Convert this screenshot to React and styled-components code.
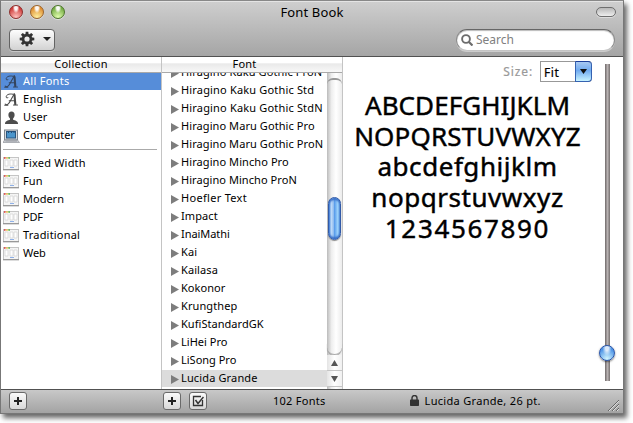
import React from "react";
import styled, { createGlobalStyle } from "styled-components";

const GlobalStyle = createGlobalStyle`
  * { box-sizing: border-box; }
  body { margin: 0; background: #fff; overflow: hidden; }
`;

const Stage = styled.div`
  width: 633px;
  height: 423px;
  overflow: hidden;
  background: #fff;
  font-family: "Noto Sans", "Open Sans", sans-serif;
  font-size: 11px;
  line-height: 18px;
  color: #000;
  white-space: nowrap;
`;

const Window = styled.main`
  width: 624px;
  height: 414px;
  display: flex;
  flex-direction: column;
  border: 1px solid #777;
  border-top-color: #888;
  background: #fff;
  box-shadow: 3px 4px 5px 0 rgba(0, 0, 0, 0.6);
`;

const Spaced = styled.span`
  letter-spacing: ${(p) => p.$ls ?? 0.12}px;
`;

const Chrome = styled.header`
  height: 56px;
  flex: none;
  border-top: 1px solid #e4e4e4;
  border-bottom: 1px solid #515151;
  background: linear-gradient(#cecece, #a5a5a5);
`;

const TitleBar = styled.div`
  height: 22px;
  display: grid;
  grid-template-columns: 80px 1fr 80px;
  align-items: center;
  padding-bottom: 2px;
`;

const Lights = styled.div`
  display: flex;
  gap: 7px;
  padding-left: 8px;
`;

const Light = styled.i`
  width: 14px;
  height: 14px;
  border-radius: 50%;
  border: 1px solid ${(p) => p.$edge};
  background:
    radial-gradient(ellipse at 50% 14%, rgba(255,255,255,0.95) 0 16%, rgba(255,255,255,0) 38%),
    radial-gradient(circle at 50% 92%, ${(p) => p.$glow}, ${(p) => p.$color} 75%);
  box-shadow: 0 1px 0 rgba(255, 255, 255, 0.45);
`;

const Title = styled.h1`
  margin: 0;
  text-align: center;
  font-size: 13px;
  line-height: 20px;
  font-weight: 400;
`;

const Pill = styled.i`
  justify-self: end;
  margin-right: 7px;
  width: 20px;
  height: 10px;
  border: 1px solid #6e6e6e;
  border-radius: 5px;
  background: linear-gradient(#b8b8b8, #eee);
  box-shadow: 0 1px 0 #ddd;
`;

const Tools = styled.div`
  display: flex;
  justify-content: space-between;
  padding: 5px 8px 0;
`;

const GearButton = styled.button`
  width: 46px;
  height: 22px;
  display: flex;
  align-items: center;
  gap: 8px;
  padding: 0 0 2px 9px;
  border: 1px solid #636363;
  border-radius: 4px;
  background: linear-gradient(#fdfdfd, #d2d2d2);
  box-shadow: 0 1px 0 rgba(255, 255, 255, 0.35);
`;

const SearchField = styled.div`
  width: 159px;
  height: 22px;
  display: flex;
  align-items: center;
  gap: 3px;
  padding-left: 4px;
  border: 1px solid #8b8b8b;
  border-top-color: #666;
  border-bottom-color: #c4c4c4;
  border-radius: 11px;
  background: #fff;
  box-shadow: inset 0 1px 1px #bbb, 0 1px 0 #ccc;
  color: #808080;
  font-size: 12px;
`;

const Body = styled.div`
  height: 332px;
  flex: none;
  display: flex;
`;

const Column = styled.section`
  width: ${(p) => p.$w}px;
  flex: none;
  display: flex;
  flex-direction: column;
  border-right: 1px solid #c4c4c4;
`;

const ColumnHead = styled.div`
  height: 16px;
  flex: none;
  line-height: 14px;
  padding-right: ${(p) => p.$pad ?? 0}px;
  text-align: center;
  border-bottom: 1px solid #a9a9a9;
  background: linear-gradient(#fff 0 40%, #e9e9e9 45%, #f8f8f8);
`;

const CollectionRow = styled.div`
  height: 18px;
  display: flex;
  align-items: center;
  gap: 3px;
  padding: 0 0 2px 2px;
  color: ${(p) => (p.$on ? "#fff" : "#000")};
  background: ${(p) => (p.$on ? "linear-gradient(#568dd9 17px, transparent 17px)" : "none")};

  svg { flex: none; margin-top: 2px; }
`;

const Divider = styled.div`
  height: 1px;
  margin: 4px 4px 5px 2px;
  background: #aaa;
`;

const FontPane = styled.div`
  flex: 1;
  min-height: 0;
  display: flex;
`;

const FontList = styled.div`
  flex: 1;
  min-width: 0;
  overflow: hidden;
  display: flex;
  flex-direction: column;
  justify-content: flex-end;
  padding-bottom: 2px;
`;

const FontRow = styled.div`
  height: 18px;
  flex: none;
  display: flex;
  align-items: center;
  gap: 2px;
  padding: 0 0 2px 9px;
  line-height: 17px;
  background: ${(p) => (p.$on ? "linear-gradient(transparent 1px, #dcdcdc 1px)" : "none")};

  svg { flex: none; margin-top: 4px; }
`;

const Scroller = styled.div`
  width: 15px;
  display: flex;
  flex-direction: column;
  align-items: center;
  background: linear-gradient(90deg, #bbb, #eee 30%, #fff 60%, #ececec);
`;

const TrackCap = styled.i`
  width: 15px;
  height: 6px;
  flex: none;
  margin-top: 5px;
  border-top: 2px solid #999;
  border-radius: 8px 8px 0 0;
`;

const ScrollThumb = styled.i`
  width: 13px;
  height: 43px;
  flex: none;
  margin-top: 113px;
  border: 1px solid #315aa8;
  border-radius: 7px;
  background: linear-gradient(90deg, #4f91e4, #c2dcf8 20%, #8fbcf0 42%, #5b9eeb 50%, #9fd4fc 80%, #65a4e4);
  box-shadow: inset 0 2px 2px #3a70c8, inset 0 -2px 2px #3a70c8, 0 1px 1px #888;
`;

const TrackEnd = styled.i`
  width: 15px;
  height: 12px;
  flex: none;
  margin-top: 103px;
  border-bottom: 1px solid #aaa;
  border-radius: 0 0 8px 8px;
  box-shadow: 0 1px 1px #999;
`;

const ScrollArrow = styled.div`
  width: 15px;
  height: 16px;
  display: grid;
  place-items: center;
  background: linear-gradient(90deg, #e4e4e4, #fff 50%, #f0f0f0);
  border-bottom: 1px solid #c5c5c5;
`;

const Preview = styled.section`
  flex: 1;
  display: flex;
  justify-content: space-between;
  padding: 4px 8px 0 12px;
`;

const PreviewMain = styled.div`
  width: 237px;
  display: flex;
  flex-direction: column;
`;

const SizeRow = styled.div`
  display: flex;
  justify-content: flex-end;
  align-items: center;
  gap: 7px;
  font-size: 12px;
  color: #999;
  -webkit-text-stroke: 0.2px;
`;

const Combo = styled.div`
  width: 52px;
  height: 21px;
  display: flex;
  justify-content: space-between;
  line-height: 22px;
  padding-left: 3px;
  color: #000;
  border: 1px solid #989898;
  border-right: 0;
  border-radius: 0 4px 4px 0;
`;

const ComboArrow = styled.span`
  width: 17px;
  height: 21px;
  margin-top: -1px;
  display: grid;
  place-items: center;
  border: 1px solid #3562b1;
  border-top-color: #1c3e99;
  border-radius: 0 4px 4px 0;
  background: linear-gradient(#a8c8f1, #70aaf0 45%, #c8f3ff);
`;

const Specimen = styled.div`
  margin: 8px 12px 0 0;
  display: flex;
  flex-direction: column;
  align-items: center;
  font-size: 26px;
  line-height: 30.7px;
  -webkit-text-stroke: 0.45px #000;
`;

const SliderTrack = styled.div`
  width: 16px;
  height: 317px;
  margin-top: 3px;
  display: flex;
  flex-direction: column;
  align-items: center;
  background: linear-gradient(90deg, #6f6969, #b7b1b1 50%, #767070) 6px 0 / 5px 100% no-repeat;
`;

const SliderKnob = styled.i`
  width: 16px;
  height: 16px;
  flex: none;
  margin-top: 281px;
  border-radius: 50%;
  border: 1px solid #2b56aa;
  background:
    radial-gradient(ellipse at 50% 15%, rgba(255,255,255,0.8) 0 15%, rgba(255,255,255,0) 45%),
    radial-gradient(circle at 50% 90%, #d2f6ff, #4f95e6 70%);
  box-shadow: 0 1px 2px rgba(0, 0, 0, 0.5);
`;

const Footer = styled.footer`
  flex: 1;
  display: flex;
  align-items: center;
  padding: 0 2px 2px 8px;
  border-top: 1px solid #515151;
  background: linear-gradient(#c8c8c8, #a3a3a3);
`;

const SquareButton = styled.button`
  width: 18px;
  height: 18px;
  flex: none;
  display: grid;
  place-items: center;
  padding: 0;
  margin-right: ${(p) => p.$after ?? 0}px;
  border: 1px solid #6a6a6a;
  border-radius: 3px;
  background: linear-gradient(#fafafa, #d8d8d8);
`;

const Status = styled.span`
  display: flex;
  align-items: center;
  gap: 6px;
  margin-left: ${(p) => p.$before}px;
`;

const Grip = styled.svg`
  margin: 9px 2px 0 auto;
`;

function ScriptA({ light }) {
  return (
    <svg width="17" height="16" viewBox="0 0 17 16" fill="none" stroke={light ? "#34455e" : "#484848"} strokeLinecap="round">
      <path d="M2.200 12.200c2 1.700 3.800-.6 5.200-3.400L11.200 2" strokeWidth="1.100" />
      <path d="M11.200 2 12 12.400M11.800 2.800l.8 9.500" strokeWidth="1.500" />
      <path d="M10.500 13h4M1.800 13.300h3M6.200 8.700h5.500" strokeWidth="1.100" />
      <path d="M9.700 2.200C6 1.300 3 3 3.200 5c.1 1.200 1.500 1.400 1.800.5" strokeWidth="1" />
    </svg>
  );
}

function UserIcon() {
  return (
    <svg width="17" height="16" viewBox="0 0 17 16">
      <path d="M8.500 1.500c2 0 3.200 1.400 3.100 3.400 0 1.500-.7 2.700-1.500 3.500v1.400c1.800.5 5 1.200 5 4.200H2c0-3 3-3.700 5-4.200V8.400C6.100 7.600 5.400 6.400 5.400 4.900c0-2 1.100-3.400 3.100-3.400Z" fill="#4d4d4d" />
    </svg>
  );
}

function ComputerIcon() {
  return (
    <svg width="17" height="16" viewBox="0 0 17 16">
      <rect x="1.500" y="2" width="13" height="10" fill="#d5d9dd" stroke="#7d848c" />
      <rect x="3.500" y="3.500" width="9" height="6.500" fill="#4b95cb" stroke="#28557e" />
      <path d="M5.500 3v2M8.500 3v2M11 3v2" stroke="#234d76" />
      <path d="M1.500 12h13l2 2.500H0Z" fill="#c9ccd1" stroke="#878a91" strokeWidth=".6" />
      <path d="M2.500 13h11.500" stroke="#84888f" strokeWidth=".7" />
    </svg>
  );
}

function CollectionIcon() {
  return (
    <svg width="17" height="16" viewBox="0 0 17 16">
      <rect x=".5" y="1.500" width="15" height="12" fill="#f5f5f5" stroke="#c5c5c5" />
      <path d="M0 13.500h16" stroke="#999" />
      <path d="M0 14.500h16" stroke="#dcdcdc" />
      <path d="M2 4h3v6H2zM7 4h3v6H7zM11 4h3v6h-3z" fill="#fff" stroke="#d5d5d5" strokeWidth=".8" />
      <path d="M1 2h1.500" stroke="#e53935" strokeWidth="1.500" />
      <path d="M3.200 2h1.500" stroke="#eec02c" strokeWidth="1.500" />
      <path d="M5.400 2h1.500" stroke="#4caf37" strokeWidth="1.500" />
      <path d="M7 11.500h4" stroke="#8fb1e8" />
    </svg>
  );
}

function Triangle() {
  return (
    <svg width="8" height="9" viewBox="0 0 8 9">
      <path d="M0 0 8 4.500 0 9Z" fill="#7d7d7d" />
    </svg>
  );
}

const teeth = [0, 45, 90, 135, 180, 225, 270, 315];

const collections = [
  ["All Fonts", ScriptA, 0.28],
  ["English", ScriptA, 0.28],
  ["User", UserIcon, 0.1],
  ["Computer", ComputerIcon, -0.05],
];
const custom = [["Fixed Width", 0.2], ["Fun", 0.1], ["Modern", 0], ["PDF", -0.25], ["Traditional", 0.2], ["Web", -0.1]];
const fonts = [
  ["Hiragino Kaku Gothic ProN", 0.12],
  ["Hiragino Kaku Gothic Std", 0.17],
  ["Hiragino Kaku Gothic StdN", 0.17],
  ["Hiragino Maru Gothic Pro", 0.08],
  ["Hiragino Maru Gothic ProN", 0.08],
  ["Hiragino Mincho Pro", 0.08],
  ["Hiragino Mincho ProN", 0.06],
  ["Hoefler Text", 0.3],
  ["Impact", 0.1],
  ["InaiMathi", -0.06],
  ["Kai", 0.1],
  ["Kailasa", 0.1],
  ["Kokonor", 0.05],
  ["Krungthep", 0.1],
  ["KufiStandardGK", 0.04],
  ["LiHei Pro", 0.03],
  ["LiSong Pro", 0],
  ["Lucida Grande", 0.14],
];
const specimen = [
  ["ABCDEFGHIJKLM", 0.06],
  ["NOPQRSTUVWXYZ", 0.16],
  ["abcdefghijklm", 0.54],
  ["nopqrstuvwxyz", 0.54],
  ["1234567890", 1.66],
];

export default function App() {
  return (
    <Stage>
      <GlobalStyle />
      <Window>
        <Chrome>
          <TitleBar>
            <Lights>
              <Light $edge="#8c2f2d" $color="#cf3c3a" $glow="#ffc4c0" />
              <Light $edge="#9a642c" $color="#df8f32" $glow="#fff0a0" />
              <Light $edge="#4d752c" $color="#76ad45" $glow="#e2ffb0" />
            </Lights>
            <Title><Spaced $ls={0.14}>Font Book</Spaced></Title>
            <Pill />
          </TitleBar>
          <Tools>
            <GearButton aria-label="Action">
              <svg width="16" height="16" viewBox="-8 -8 16 16">
                {teeth.map((a) => (
                  <path key={a} d="M-1.300-7.300h2.600L1.700-4h-3.400Z" fill="#333" transform={`rotate(${a})`} />
                ))}
                <circle r="3.900" fill="none" stroke="#333" strokeWidth="2.600" />
              </svg>
              <svg width="8" height="4" viewBox="0 0 8 4"><path d="M0 0h8L4 4Z" fill="#222" /></svg>
            </GearButton>
            <SearchField>
              <svg width="12" height="12" viewBox="0 0 12 12" fill="none" stroke="#6c6c6c">
                <circle cx="5" cy="5" r="3.900" strokeWidth="1.900" />
                <path d="m8 8 3.500 3.500" strokeWidth="2.200" />
              </svg>
              <Spaced $ls={0}>Search</Spaced>
            </SearchField>
          </Tools>
        </Chrome>

        <Body>
          <Column $w={161}>
            <ColumnHead><Spaced $ls={0.25}>Collection</Spaced></ColumnHead>
            {collections.map(([name, Icon, ls], i) => (
              <CollectionRow key={name} $on={i === 0}>
                <Icon light={i === 0} />
                <Spaced $ls={ls}>{name}</Spaced>
              </CollectionRow>
            ))}
            <Divider />
            {custom.map(([name, ls]) => (
              <CollectionRow key={name}>
                <CollectionIcon />
                <Spaced $ls={ls}>{name}</Spaced>
              </CollectionRow>
            ))}
          </Column>

          <Column $w={181}>
            <ColumnHead $pad={15}><Spaced $ls={0.25}>Font</Spaced></ColumnHead>
            <FontPane>
              <FontList>
                {fonts.map(([name, ls], i) => (
                  <FontRow key={name} $on={i === fonts.length - 1}>
                    <Triangle />
                    <Spaced $ls={ls}>{name}</Spaced>
                  </FontRow>
                ))}
              </FontList>
              <Scroller>
                <TrackCap />
                <ScrollThumb />
                <TrackEnd />
                <ScrollArrow><svg width="7" height="6"><path d="M0 6h7L3.500 0Z" fill="#555" /></svg></ScrollArrow>
                <ScrollArrow><svg width="7" height="6"><path d="M0 0h7L3.500 6Z" fill="#555" /></svg></ScrollArrow>
              </Scroller>
            </FontPane>
          </Column>

          <Preview>
            <PreviewMain>
              <SizeRow>
                <Spaced $ls={0.9}>Size:</Spaced>
                <Combo>
                  <Spaced $ls={0.6}>Fit</Spaced>
                  <ComboArrow><svg width="7" height="5"><path d="M0 0h7L3.500 5Z" fill="#111" /></svg></ComboArrow>
                </Combo>
              </SizeRow>
              <Specimen>
                {specimen.map(([line, ls]) => <Spaced key={line} $ls={ls}>{line}</Spaced>)}
              </Specimen>
            </PreviewMain>
            <SliderTrack><SliderKnob /></SliderTrack>
          </Preview>
        </Body>

        <Footer>
          <SquareButton aria-label="Add collection" $after={136}>
            <svg width="8" height="8"><path d="M4 0v8M0 4h8" stroke="#222" strokeWidth="2" /></svg>
          </SquareButton>
          <SquareButton aria-label="Add font" $after={8}>
            <svg width="8" height="8"><path d="M4 0v8M0 4h8" stroke="#222" strokeWidth="2" /></svg>
          </SquareButton>
          <SquareButton aria-label="Enable font">
            <svg width="12" height="12" fill="none" stroke="#333">
              <path d="M9 1.500H1.500v9h9V5" strokeWidth="1.300" />
              <path d="m3.500 5 2.500 3.500L11.500 2" strokeWidth="1.500" />
            </svg>
          </SquareButton>
          <Status $before={66}><Spaced $ls={0.27}>102 Fonts</Spaced></Status>
          <Status $before={84}>
            <svg width="9" height="11" viewBox="0 0 9 11">
              <path d="M2 5V3a2.500 2.500 0 0 1 5 0v2" fill="none" stroke="#333" strokeWidth="1.400" />
              <rect y="4.500" width="9" height="6.500" rx=".7" fill="#333" />
            </svg>
            <Spaced $ls={0.31}>Lucida Grande, 26 pt.</Spaced>
          </Status>
          <Grip width="12" height="12" stroke="#666">
            <path d="M1 12 12 1M5 12l7-7M9 12l3-3" />
            <path d="M2 12 12 2M6 12l6-6M10 12l2-2" stroke="#ddd" />
          </Grip>
        </Footer>
      </Window>
    </Stage>
  );
}
